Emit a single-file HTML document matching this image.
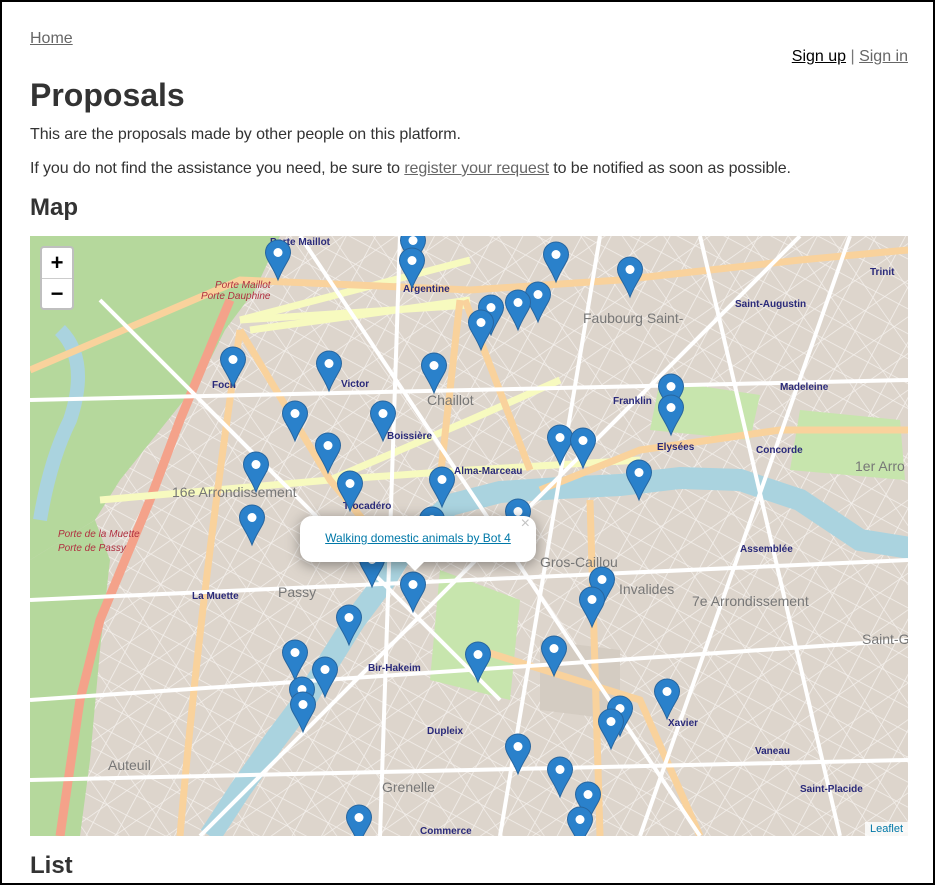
<!DOCTYPE html>
<html><head><meta charset="utf-8">
<style>
html,body{margin:0;padding:0;}
body{width:935px;height:885px;overflow:hidden;font-family:"Liberation Sans",sans-serif;color:#333;background:#fff;}
.frame{position:absolute;left:0;top:0;width:931px;height:881px;border:2px solid #000;}
a{color:#666;}
.home{position:absolute;left:30px;top:30px;font-size:16px;}
.auth{position:absolute;right:27px;top:48px;font-size:16px;color:#777;}
.auth a.up{color:#000;}
h1{position:absolute;left:30px;top:77px;margin:0;font-size:32px;font-weight:bold;color:#333;}
.p1{position:absolute;left:30px;top:126px;font-size:16px;letter-spacing:-0.08px;}
.p2{position:absolute;left:30px;top:160px;font-size:16px;letter-spacing:-0.1px;}
h2{position:absolute;margin:0;font-size:24px;font-weight:bold;color:#333;left:30px;}
.map{position:absolute;left:30px;top:236px;width:878px;height:600px;overflow:hidden;background:#ddd5cc;}
.zoom{position:absolute;left:10px;top:10px;width:30px;height:60px;background:#fff;border:2px solid rgba(0,0,0,.25);border-radius:4px;font-size:22px;font-weight:bold;text-align:center;color:#000;}
.zoom div{height:30px;line-height:30px;}
.zoom div:first-child{border-bottom:1px solid #ccc;}
.popup{position:absolute;left:270px;top:280px;width:236px;height:46px;background:#fff;border-radius:12px;box-shadow:0 3px 14px rgba(0,0,0,.4);font-size:12px;text-align:center;line-height:44px;}
.popup a{color:#0078a8;}
.popup .x{position:absolute;right:6px;top:-14px;color:#c3c3c3;font-size:16px;}
.tip{position:absolute;left:375px;top:325px;width:0;height:0;border-left:10px solid transparent;border-right:10px solid transparent;border-top:10px solid #fff;}
.attr{position:absolute;right:0;bottom:0;background:rgba(255,255,255,.8);font-size:11px;padding:1px 5px;color:#0078a8;}
</style></head><body>
<div class="frame"></div>
<a class="home" href="#">Home</a>
<div class="auth"><a class="up" href="#">Sign up</a> | <a href="#">Sign in</a></div>
<h1>Proposals</h1>
<div class="p1">This are the proposals made by other people on this platform.</div>
<div class="p2">If you do not find the assistance you need, be sure to <a href="#">register your request</a> to be notified as soon as possible.</div>
<h2 style="top:194px">Map</h2>
<div class="map">
<svg width="878" height="600" viewBox="30 236 878 600" xmlns="http://www.w3.org/2000/svg" font-family="Liberation Sans, sans-serif">
<defs>
<pattern id="grid" width="26" height="22" patternUnits="userSpaceOnUse" patternTransform="rotate(28)">
<path d="M0 0 H26 M0 0 V22" stroke="#f4f0ec" stroke-width="1.6" fill="none"/>
</pattern>
<pattern id="grid2" width="34" height="30" patternUnits="userSpaceOnUse" patternTransform="rotate(-35)">
<path d="M0 0 H34 M0 0 V30" stroke="#f4f0ec" stroke-width="1.4" fill="none"/>
</pattern>
<g id="mk"><path d="M0 -40 a12.5 12.5 0 0 1 12.5 12.5 c0 7 -7 13 -12.5 27.5 c-5.5 -14.5 -12.5 -20.5 -12.5 -27.5 a12.5 12.5 0 0 1 12.5 -12.5 z" fill="#2a81cb" stroke="#2766a0"/><circle cx="0" cy="-27.5" r="4.5" fill="#fff"/></g>
</defs>
<rect x="30" y="236" width="878" height="600" fill="#ddd5cc"/>
<rect x="30" y="236" width="878" height="600" fill="url(#grid)"/>
<rect x="30" y="236" width="878" height="600" fill="url(#grid2)"/>
<path d="M30 236 H280 L255 290 L225 330 L200 380 L160 430 L120 480 L95 520 L30 560 Z" fill="#b5d89c"/>
<path d="M30 560 L95 520 L110 560 L100 650 L90 760 L80 836 H30 Z" fill="#b5d89c"/>
<path d="M230 300 L180 420 L150 500 L100 620 L80 700 L60 836" stroke="#f4a28a" stroke-width="9" fill="none"/>
<path d="M60 330 Q90 360 70 420 Q50 460 40 520" stroke="#aad3df" stroke-width="14" fill="none"/>
<path d="M440 570 L520 600 L510 700 L430 680 Z" fill="#c7e5ad"/>
<path d="M800 410 L900 420 L905 480 L790 470 Z" fill="#c7e5ad"/>
<path d="M660 380 L760 395 L750 440 L650 430 Z" fill="#c7e5ad"/>
<path d="M540 640 L620 650 L620 720 L540 710 Z" fill="#d4ccc2"/>
<path d="M910 548 L860 540 L800 500 L740 480 L680 478 L620 485 L560 488 L500 492 L450 505 L410 540 L385 580 L355 620 L330 660 L305 700 L275 740 L240 790 L210 836" stroke="#aad3df" stroke-width="22" fill="none"/>
<g stroke="#f7fabf" stroke-width="7" fill="none">
<path d="M240 320 L470 305"/><path d="M240 320 L470 260"/><path d="M250 330 L470 300"/>
<path d="M330 480 L470 420 L560 380"/>
<path d="M100 500 L330 480 L470 470 L640 460"/>
</g>
<g stroke="#f9d29c" stroke-width="7" fill="none">
<path d="M30 370 L240 280 L470 290 L620 280 L800 260 L908 250"/>
<path d="M465 300 L530 470"/>
<path d="M240 330 L330 480 L380 540"/>
<path d="M460 300 L440 480"/>
<path d="M240 330 Q200 600 180 836"/>
<path d="M480 650 L640 700 L700 836"/>
<path d="M590 500 L600 836"/>
<path d="M540 490 L640 450 L780 430 L908 430"/>
</g>
<g stroke="#fff" stroke-width="4" fill="none">
<path d="M30 400 L908 380"/><path d="M100 300 L500 700"/><path d="M300 236 L700 836"/>
<path d="M600 236 L500 836"/><path d="M30 700 L908 640"/><path d="M700 236 L840 836"/>
<path d="M400 236 L380 836"/><path d="M30 600 L908 560"/><path d="M200 836 L800 236"/>
<path d="M30 780 L908 760"/><path d="M850 236 L640 836"/>
</g>
<g fill="#2a2a7a" font-size="10" font-weight="bold">
<text x="403" y="292">Argentine</text><text x="212" y="388">Foch</text><text x="341" y="387">Victor</text>
<text x="387" y="439">Boissière</text><text x="613" y="404">Franklin</text><text x="657" y="450">Elysées</text>
<text x="756" y="453">Concorde</text><text x="454" y="474">Alma-Marceau</text><text x="343" y="509">Trocadéro</text>
<text x="740" y="552">Assemblée</text><text x="192" y="599">La Muette</text><text x="368" y="671">Bir-Hakeim</text>
<text x="427" y="734">Dupleix</text><text x="668" y="726">Xavier</text><text x="755" y="754">Vaneau</text>
<text x="800" y="792">Saint-Placide</text><text x="420" y="834">Commerce</text><text x="735" y="307">Saint-Augustin</text>
<text x="780" y="390">Madeleine</text><text x="870" y="275">Trinit</text><text x="270" y="245">Porte Maillot</text>
</g>
<g fill="#b03040" font-size="10" font-style="italic">
<text x="215" y="288">Porte Maillot</text><text x="201" y="299">Porte Dauphine</text>
<text x="58" y="537">Porte de la Muette</text><text x="58" y="551">Porte de Passy</text>
</g>
<g fill="#777" font-size="14">
<text x="583" y="323">Faubourg Saint-</text><text x="427" y="405">Chaillot</text><text x="172" y="497">16e Arrondissement</text>
<text x="540" y="567">Gros-Caillou</text><text x="278" y="597">Passy</text><text x="619" y="594">Invalides</text>
<text x="692" y="606">7e Arrondissement</text><text x="108" y="770">Auteuil</text><text x="382" y="792">Grenelle</text>
<text x="855" y="471">1er Arro</text><text x="862" y="644">Saint-G</text>
</g>
<g>
<use href="#mk" x="278" y="280"/><use href="#mk" x="413" y="268"/><use href="#mk" x="412" y="288"/><use href="#mk" x="556" y="282"/>
<use href="#mk" x="630" y="297"/><use href="#mk" x="538" y="322"/><use href="#mk" x="518" y="330"/><use href="#mk" x="491" y="335"/>
<use href="#mk" x="481" y="350"/><use href="#mk" x="233" y="387"/><use href="#mk" x="329" y="391"/><use href="#mk" x="434" y="393"/>
<use href="#mk" x="295" y="441"/><use href="#mk" x="383" y="441"/><use href="#mk" x="671" y="414"/><use href="#mk" x="671" y="435"/>
<use href="#mk" x="560" y="465"/><use href="#mk" x="583" y="468"/><use href="#mk" x="328" y="473"/><use href="#mk" x="256" y="492"/>
<use href="#mk" x="350" y="511"/><use href="#mk" x="442" y="507"/><use href="#mk" x="639" y="500"/><use href="#mk" x="252" y="545"/>
<use href="#mk" x="518" y="539"/><use href="#mk" x="432" y="547"/><use href="#mk" x="372" y="587"/><use href="#mk" x="602" y="607"/>
<use href="#mk" x="592" y="627"/><use href="#mk" x="413" y="612"/><use href="#mk" x="349" y="645"/><use href="#mk" x="295" y="680"/>
<use href="#mk" x="325" y="697"/><use href="#mk" x="478" y="682"/><use href="#mk" x="554" y="676"/><use href="#mk" x="302" y="717"/>
<use href="#mk" x="303" y="732"/><use href="#mk" x="667" y="719"/><use href="#mk" x="620" y="736"/><use href="#mk" x="611" y="749"/>
<use href="#mk" x="518" y="774"/><use href="#mk" x="560" y="797"/><use href="#mk" x="588" y="822"/><use href="#mk" x="580" y="847"/>
<use href="#mk" x="359" y="845"/>
</g>
</svg>
<div class="zoom"><div>+</div><div>−</div></div>
<div class="popup"><a href="#">Walking domestic animals by Bot 4</a><span class="x">×</span></div>
<div class="tip"></div>
<div class="attr">Leaflet</div>
</div>
<h2 style="top:852px">List</h2>
</body></html>
